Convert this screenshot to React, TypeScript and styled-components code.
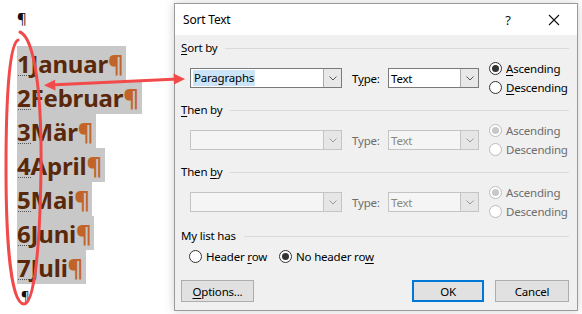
import React from "react";
import styled, { createGlobalStyle } from "styled-components";

const Global = createGlobalStyle`
  html, body { margin: 0; padding: 0; background: #ffffff; }
  body { width: 582px; height: 314px; overflow: hidden; }
  #root { width: 582px; height: 314px; }
`;

const UI = `"Noto Sans", "Open Sans", sans-serif`;

const Page = styled.div`
  position: relative;
  width: 582px;
  height: 314px;
  display: flex;
  background: #fff;
  overflow: hidden;
`;

const Doc = styled.div`
  width: 174px;
  flex: none;
  padding: 8px 0 0 17px;
  box-sizing: border-box;
  display: flex;
  flex-direction: column;
  font-family: "Noto Sans", "DejaVu Sans", sans-serif;
`;

const Mark = styled.div`
  height: 38px;
  font-size: 15px;
  line-height: 20px;
  color: #111;
`;

const LineRow = styled.div`
  height: 34px;
  display: flex;
`;

const Hl = styled.span`
  display: inline-flex;
  align-items: center;
  background: #c8c8c8;
  padding-right: 3px;
  font-weight: 700;
  font-size: 24px;
  letter-spacing: -0.2px;
  color: #5a280a;
`;

const Num = styled.span`
  position: relative;
  &::after {
    content: "";
    position: absolute;
    left: 1px;
    right: 0;
    bottom: 4px;
    border-bottom: 1px dotted #555;
  }
`;

const Pil = styled.span`
  color: #c2642a;
  font-weight: 700;
`;

const EndMark = styled.div`
  font-size: 13px;
  line-height: 16px;
  color: #111;
  margin-top: 4px;
  padding-left: 4px;
`;

const Dialog = styled.div`
  margin-top: 3px;
  width: 402px;
  height: 306px;
  flex: none;
  border: 1px solid #9a9a9a;
  box-shadow: 0 0 10px rgba(0, 0, 0, 0.18);
  background: #f0f0f0;
  display: flex;
  flex-direction: column;
  font-family: ${UI};
  font-size: 11.5px;
  letter-spacing: -0.2px;
  color: #000;
`;

const TitleBar = styled.div`
  height: 31px;
  background: #fff;
  display: flex;
  align-items: center;
  padding-left: 8px;
  flex: none;
`;

const Title = styled.div`
  flex: 1;
  font-size: 12px;
`;

const TitleBtn = styled.div`
  width: 46px;
  height: 31px;
  display: flex;
  align-items: center;
  justify-content: center;
  font-size: 13px;
  color: #111;
`;

const Body = styled.div`
  flex: 1;
  padding: 6px 6px 5px 6px;
  display: flex;
  flex-direction: column;
`;

const Header = styled.div<{ $top?: number }>`
  height: 14px;
  line-height: 14px;
  display: flex;
  align-items: center;
  gap: 8px;
  margin-top: ${(p) => p.$top ?? 0}px;
  &::after {
    content: "";
    flex: 1;
    height: 1px;
    background: #dadada;
    margin-right: 2px;
  }
`;

const U = styled.span`
  text-decoration: underline;
  text-underline-offset: 2px;
`;

const SortRow = styled.div`
  height: 38px;
  margin-top: 4px;
  padding-left: 9px;
  display: flex;
  align-items: center;
`;

const Combo = styled.div<{ $w: number; $disabled?: boolean }>`
  width: ${(p) => p.$w}px;
  height: 20px;
  box-sizing: border-box;
  border: 1px solid ${(p) => (p.$disabled ? "#c4c4c4" : "#7a7a7a")};
  background: ${(p) => (p.$disabled ? "#f5f5f5" : "#fff")};
  display: flex;
  align-items: stretch;
  flex: none;
`;

const ComboText = styled.div<{ $disabled?: boolean }>`
  flex: 1;
  display: flex;
  align-items: center;
  padding-left: 2px;
  color: ${(p) => (p.$disabled ? "#8a8a7a" : "#000")};
`;

const Selected = styled.span`
  background: #cce4f7;
  padding: 0 1px;
  line-height: 16px;
`;

const Drop = styled.div<{ $disabled?: boolean }>`
  width: 17px;
  border-left: 1px solid ${(p) => (p.$disabled ? "#c4c4c4" : "#acacac")};
  background: ${(p) => (p.$disabled ? "#e6e6e6" : "#e8e8e8")};
  display: flex;
  align-items: center;
  justify-content: center;
`;

const TypeLabel = styled.div<{ $disabled?: boolean }>`
  width: 36px;
  margin-left: 10px;
  color: ${(p) => (p.$disabled ? "#6d6d6d" : "#000")};
  flex: none;
`;

const Radios = styled.div`
  margin-left: 10px;
  display: flex;
  flex-direction: column;
`;

const RadioItem = styled.div<{ $disabled?: boolean }>`
  height: 19px;
  display: flex;
  align-items: center;
  gap: 4px;
  color: ${(p) => (p.$disabled ? "#6d6d6d" : "#000")};
  white-space: nowrap;
`;

const Circle = styled.span<{ $checked?: boolean; $disabled?: boolean }>`
  width: 13px;
  height: 13px;
  box-sizing: border-box;
  border-radius: 50%;
  border: 1px solid ${(p) => (p.$disabled ? "#bcbcbc" : "#333")};
  background: #fff;
  display: inline-flex;
  align-items: center;
  justify-content: center;
  flex: none;
  &::after {
    content: "";
    width: 7px;
    height: 7px;
    border-radius: 50%;
    background: ${(p) =>
      p.$checked ? (p.$disabled ? "#c8c8c8" : "#333") : "transparent"};
  }
`;

const ListRow = styled.div`
  height: 19px;
  margin-top: 4px;
  padding-left: 8px;
  display: flex;
  align-items: center;
  gap: 12px;
`;

const Buttons = styled.div`
  margin-top: 14px;
  display: flex;
  align-items: center;
  gap: 11px;
  padding-right: 2px;
`;

const Btn = styled.div<{ $w: number; $default?: boolean }>`
  width: ${(p) => p.$w}px;
  height: 22px;
  box-sizing: border-box;
  background: #e1e1e1;
  border: ${(p) => (p.$default ? "2px solid #0078d7" : "1px solid #adadad")};
  display: flex;
  align-items: center;
  justify-content: center;
  flex: none;
`;

const Spacer = styled.div`
  flex: 1;
`;

const Overlay = styled.svg`
  position: absolute;
  left: 0;
  top: 0;
  pointer-events: none;
`;

const Chevron: React.FC<{ c: string }> = ({ c }) => (
  <svg width="8" height="5" viewBox="0 0 8 5">
    <path d="M0.5 0.5 L4 4 L7.5 0.5" fill="none" stroke={c} strokeWidth="1" />
  </svg>
);

const ComboBox: React.FC<{ w: number; text?: React.ReactNode; disabled?: boolean }> = ({
  w,
  text,
  disabled,
}) => (
  <Combo $w={w} $disabled={disabled}>
    <ComboText $disabled={disabled}>{text}</ComboText>
    <Drop $disabled={disabled}>
      <Chevron c={disabled ? "#9a9a9a" : "#555"} />
    </Drop>
  </Combo>
);

const Radio: React.FC<{ checked?: boolean; disabled?: boolean; children: React.ReactNode }> = ({
  checked,
  disabled,
  children,
}) => (
  <RadioItem $disabled={disabled}>
    <Circle $checked={checked} $disabled={disabled} />
    <span>{children}</span>
  </RadioItem>
);

const rows = [
  ["1", "Januar"],
  ["2", "Februar"],
  ["3", "Mär"],
  ["4", "April"],
  ["5", "Mai"],
  ["6", "Juni"],
  ["7", "Juli"],
];

export default function App() {
  return (
    <>
      <Global />
      <Page>
        <Doc>
          <Mark>¶</Mark>
          {rows.map(([n, m]) => (
            <LineRow key={n}>
              <Hl>
                <Num>{n}</Num>
                {m}
                <Pil>¶</Pil>
              </Hl>
            </LineRow>
          ))}
          <EndMark>¶</EndMark>
        </Doc>
        <Dialog>
          <TitleBar>
            <Title>Sort Text</Title>
            <TitleBtn>?</TitleBtn>
            <TitleBtn>
              <svg width="12" height="12" viewBox="0 0 12 12">
                <path d="M1 1 L11 11 M11 1 L1 11" stroke="#111" strokeWidth="1.1" />
              </svg>
            </TitleBtn>
          </TitleBar>
          <Body>
            <Header>
              <span>
                <U>S</U>ort by
              </span>
            </Header>
            <SortRow>
              <ComboBox w={152} text={<Selected>Paragraphs</Selected>} />
              <TypeLabel>
                T<U>y</U>pe:
              </TypeLabel>
              <ComboBox w={91} text="Text" />
              <Radios>
                <Radio checked>
                  <U>A</U>scending
                </Radio>
                <Radio>
                  <U>D</U>escending
                </Radio>
              </Radios>
            </SortRow>
            <Header $top={6}>
              <span>
                <U>T</U>hen by
              </span>
            </Header>
            <SortRow>
              <ComboBox w={152} disabled />
              <TypeLabel $disabled>Type:</TypeLabel>
              <ComboBox w={91} text="Text" disabled />
              <Radios>
                <Radio checked disabled>
                  Ascending
                </Radio>
                <Radio disabled>Descending</Radio>
              </Radios>
            </SortRow>
            <Header $top={6}>
              <span>
                Then <U>b</U>y
              </span>
            </Header>
            <SortRow>
              <ComboBox w={152} disabled />
              <TypeLabel $disabled>Type:</TypeLabel>
              <ComboBox w={91} text="Text" disabled />
              <Radios>
                <Radio checked disabled>
                  Ascending
                </Radio>
                <Radio disabled>Descending</Radio>
              </Radios>
            </SortRow>
            <Header $top={8}>
              <span>My list has</span>
            </Header>
            <ListRow>
              <Radio>
                Header <U>r</U>ow
              </Radio>
              <Radio checked>
                No header ro<U>w</U>
              </Radio>
            </ListRow>
            <Buttons>
              <Btn $w={73}>
                <span>
                  <U>O</U>ptions...
                </span>
              </Btn>
              <Spacer />
              <Btn $w={72} $default>
                OK
              </Btn>
              <Btn $w={74}>Cancel</Btn>
            </Buttons>
          </Body>
        </Dialog>
        <Overlay width="582" height="314" viewBox="0 0 582 314">
          <g fill="none" stroke="#f24a4a" strokeWidth="3" strokeLinecap="round">
            <path d="M20 32 C 34 38, 42 90, 41 170 C 40 250, 34 304, 24 304 C 12 304, 6 250, 6 168 C 6 90, 10 44, 18 40" />
            <path d="M50 85 L 178 79" />
          </g>
          <g fill="#f24a4a">
            <path d="M44 85.3 L 55 79.8 L 55.5 90.6 Z" />
            <path d="M185 79 L 173.5 73.5 L 174 84.5 Z" />
          </g>
        </Overlay>
      </Page>
    </>
  );
}
